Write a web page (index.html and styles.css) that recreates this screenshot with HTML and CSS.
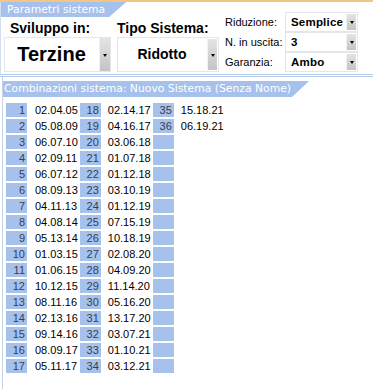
FILE: index.html
```html
<!DOCTYPE html>
<html lang="it">
<head>
  <meta charset="UTF-8" />
  <meta name="viewport" content="width=device-width, initial-scale=1.0" />
  <title>Parametri sistema</title>
  <link rel="stylesheet" href="styles.css">
</head>
<body>

  <div class="topline"></div>

  <div class="params">
    <div class="params-left">
      <div class="tab tab-params">Parametri sistema</div>
      <div class="fields">
        <div class="field sviluppo">
          <div class="field-label">Sviluppo in:</div>
          <div class="combo big">
            <span class="value">Terzine</span>
            <span class="drop"></span>
          </div>
        </div>
        <div class="field tipo">
          <div class="field-label">Tipo Sistema:</div>
          <div class="combo mid">
            <span class="value">Ridotto</span>
            <span class="drop"></span>
          </div>
        </div>
      </div>
    </div>

    <div class="options">
      <label>Riduzione:</label>
      <div class="combo small"><span class="value">Semplice</span><span class="drop"></span></div>
      <label>N. in uscita:</label>
      <div class="combo small"><span class="value">3</span><span class="drop"></span></div>
      <label>Garanzia:</label>
      <div class="combo small"><span class="value">Ambo</span><span class="drop"></span></div>
    </div>
  </div>

  <div class="combinazioni">
    <div class="tab tab-comb">Combinazioni sistema: Nuovo Sistema (Senza Nome)</div>
    <table class="grid">
      <tr><td class="n">1</td><td class="d">02.04.05</td><td class="n">18</td><td class="d">02.14.17</td><td class="n">35</td><td class="d">15.18.21</td></tr>
      <tr><td class="n">2</td><td class="d">05.08.09</td><td class="n">19</td><td class="d">04.16.17</td><td class="n">36</td><td class="d">06.19.21</td></tr>
      <tr><td class="n">3</td><td class="d">06.07.10</td><td class="n">20</td><td class="d">03.06.18</td><td class="n"></td><td class="d"></td></tr>
      <tr><td class="n">4</td><td class="d">02.09.11</td><td class="n">21</td><td class="d">01.07.18</td><td class="n"></td><td class="d"></td></tr>
      <tr><td class="n">5</td><td class="d">06.07.12</td><td class="n">22</td><td class="d">01.12.18</td><td class="n"></td><td class="d"></td></tr>
      <tr><td class="n">6</td><td class="d">08.09.13</td><td class="n">23</td><td class="d">03.10.19</td><td class="n"></td><td class="d"></td></tr>
      <tr><td class="n">7</td><td class="d">04.11.13</td><td class="n">24</td><td class="d">01.12.19</td><td class="n"></td><td class="d"></td></tr>
      <tr><td class="n">8</td><td class="d">04.08.14</td><td class="n">25</td><td class="d">07.15.19</td><td class="n"></td><td class="d"></td></tr>
      <tr><td class="n">9</td><td class="d">05.13.14</td><td class="n">26</td><td class="d">10.18.19</td><td class="n"></td><td class="d"></td></tr>
      <tr><td class="n">10</td><td class="d">01.03.15</td><td class="n">27</td><td class="d">02.08.20</td><td class="n"></td><td class="d"></td></tr>
      <tr><td class="n">11</td><td class="d">01.06.15</td><td class="n">28</td><td class="d">04.09.20</td><td class="n"></td><td class="d"></td></tr>
      <tr><td class="n">12</td><td class="d">10.12.15</td><td class="n">29</td><td class="d">11.14.20</td><td class="n"></td><td class="d"></td></tr>
      <tr><td class="n">13</td><td class="d">08.11.16</td><td class="n">30</td><td class="d">05.16.20</td><td class="n"></td><td class="d"></td></tr>
      <tr><td class="n">14</td><td class="d">02.13.16</td><td class="n">31</td><td class="d">13.17.20</td><td class="n"></td><td class="d"></td></tr>
      <tr><td class="n">15</td><td class="d">09.14.16</td><td class="n">32</td><td class="d">03.07.21</td><td class="n"></td><td class="d"></td></tr>
      <tr><td class="n">16</td><td class="d">08.09.17</td><td class="n">33</td><td class="d">01.10.21</td><td class="n"></td><td class="d"></td></tr>
      <tr><td class="n">17</td><td class="d">05.11.17</td><td class="n">34</td><td class="d">03.12.21</td><td class="n"></td><td class="d"></td></tr>
    </table>
  </div>

</body>
</html>
```

FILE: styles.css
```css
html, body { height: 100%; }
body { margin: 0; font-family: "Liberation Sans", Arial, sans-serif; background: #fff; color: #000; display: flex; flex-direction: column; }

.topline { height: 2px; background: #f3c583; flex: none; }

/* tabs with slanted right edge */
.tab { align-self: flex-start; background: #a6c2ec; color: #fff; font-family: "DejaVu Sans", Verdana, sans-serif; font-size: 10.8px; white-space: nowrap; clip-path: polygon(0 0, 100% 0, calc(100% - 17px) 100%, 0 100%); }
.tab-params { height: 15px; line-height: 15px; padding: 0 21px 0 6px; }
.tab-comb { height: 16px; line-height: 16px; padding: 0 18px 0 1px; margin-top: 4px; }

/* parametri */
.params { display: flex; flex: none; border-left: 1px solid #d3dff0; border-bottom: 3px double #b4cbec; }
.params-left { display: flex; flex-direction: column; width: 218px; }
.fields { display: flex; gap: 6px; padding: 3px 0 2px 3px; }
.field { display: flex; flex-direction: column; gap: 1px; }
.field-label { font-weight: bold; font-size: 14px; height: 16px; line-height: 16px; }
.sviluppo { width: 107px; }
.sviluppo .field-label { padding-left: 6px; }
.tipo { width: 102px; }

.combo { display: flex; background: #fff; border: 1px solid #e3e7ed; box-sizing: border-box; }
.combo .value { flex: 1; font-weight: bold; white-space: nowrap; }
.drop { width: 10px; margin: 1px; position: relative; background: linear-gradient(#e4e4e4, #c4c4c4); border-left: 1px solid #f2f2f2; box-sizing: border-box; }
.drop::after { content: ""; position: absolute; left: 50%; top: 50%; margin: -1px 0 0 -2px; border-left: 2.5px solid transparent; border-right: 2.5px solid transparent; border-top: 3px solid #000; }

.combo.big { height: 35px; }
.combo.big .value { font-size: 20px; line-height: 33px; text-align: center; }
.combo.big .drop { width: 11px; margin: 0 0 0 1px; }
.combo.mid { height: 35px; }
.combo.mid .value { font-size: 14px; line-height: 33px; text-align: center; }

.options { display: grid; grid-template-columns: 60px 73px; grid-auto-rows: 20px; margin-left: 6px; padding-top: 10px; font-size: 11px; }
.options label { line-height: 20px; }
.combo.small .value { font-size: 11.5px; line-height: 18px; padding-left: 5px; letter-spacing: 0.2px; }

/* combinazioni */
.combinazioni { flex: 1; display: flex; flex-direction: column; margin-left: 2px; border-left: 1px solid #c3d3e8; }
.grid { align-self: flex-start; border-collapse: separate; border-spacing: 2px; margin: 4px 0 0 1px; font-size: 11px; }
.grid td { height: 14px; line-height: 14px; padding: 0; white-space: nowrap; }
.grid td.n { width: 19px; padding-right: 2px; text-align: right; background: #a6c2ec; color: #36404e; }
.grid td.d { width: 43px; padding-left: 5px; }
.grid td.d:nth-child(2) { padding-left: 6px; width: 42px; }
```
